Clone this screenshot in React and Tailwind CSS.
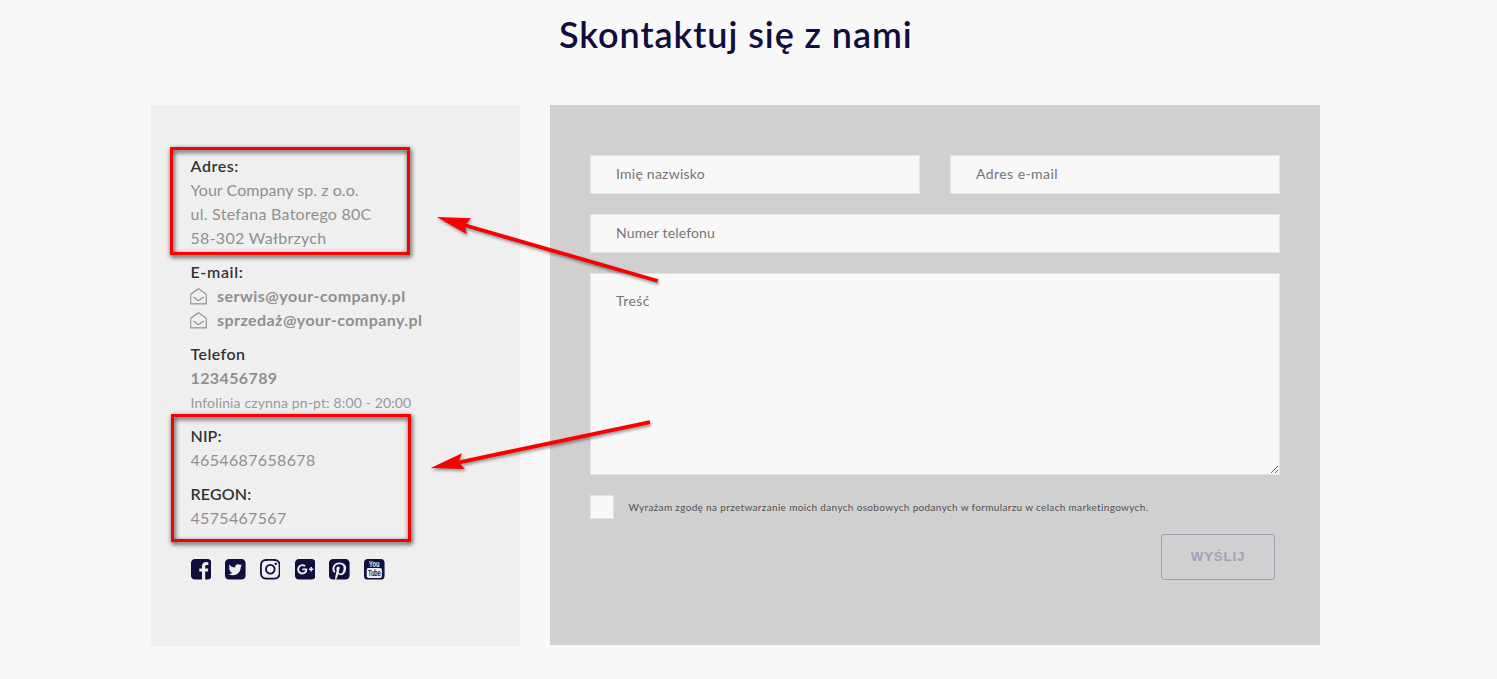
const SQUARE =
  "V1376q0 119-84.5 203.5t-203.5 84.5h-960q-119 0-203.5-84.5t-84.5-203.5v-960q0-119 84.5-203.5t203.5-84.5h960q119 0 203.5 84.5t84.5 203.5z";

const SOCIAL = [
  {
    name: "Facebook",
    d: "M1376 128q119 0 203.5 84.5t84.5 203.5v960q0 119-84.5 203.5t-203.5 84.5h-188v-595h199l30-232h-229v-148q0-56 23.5-84t91.5-28l122-1v-207q-63-9-178-9-136 0-217.5 80t-81.5 226v171h-200v232h200v595h-532q-119 0-203.5-84.5t-84.5-203.5v-960q0-119 84.5-203.5t203.5-84.5h960z",
  },
  {
    name: "Twitter",
    d: "M1408 610q-56 25-121 34 68-40 93-117-65 38-134 51-61-66-153-66-87 0-148.5 61.5t-61.5 148.5q0 29 5 48-129-7-242-65t-192-155q-29 50-29 106 0 114 91 175-47-1-100-26v2q0 75 50 133.5t123 72.5q-29 8-51 8-13 0-39-4 21 63 74.5 104t121.5 42q-116 90-261 90-26 0-50-3 148 94 322 94 112 0 210-35.5t168-95 120.5-137 75-162 24.5-168.5q0-18-1-27 63-45 105-109zm256-194v960q0 119-84.5 203.5t-203.5 84.5h-960q-119 0-203.5-84.5t-84.5-203.5v-960q0-119 84.5-203.5t203.5-84.5h960q119 0 203.5 84.5t84.5 203.5z",
  },
  {
    name: "Instagram",
    d: "M1152 896q0-106-75-181t-181-75-181 75-75 181 75 181 181 75 181-75 75-181zm138 0q0 164-115 279t-279 115-279-115-115-279 115-279 279-115 279 115 115 279zm108-410q0 38-27 65t-65 27-65-27-27-65 27-65 65-27 65 27 27 65zm-502-220q-7 0-76.5-.5t-105.5 0-96.5 3-103 10-71.5 18.5q-50 20-88 58t-58 88q-11 29-18.5 71.5t-10 103-3 96.5 0 105.5.5 76.5-.5 76.5 0 105.5 3 96.5 10 103 18.5 71.5q20 50 58 88t88 58q29 11 71.5 18.5t103 10 96.5 3 105.5 0 76.5-.5 76.5.5 105.5 0 96.5-3 103-10 71.5-18.5q50-20 88-58t58-88q11-29 18.5-71.5t10-103 3-96.5 0-105.5-.5-76.5.5-76.5 0-105.5-3-96.5-10-103-18.5-71.5q-20-50-58-88t-88-58q-29-11-71.5-18.5t-103-10-96.5-3-105.5 0-76.5.5zm768 630q0 229-5 317-10 208-124 322t-322 124q-88 5-317 5t-317-5q-208-10-322-124t-124-322q-5-88-5-317t5-317q10-208 124-322t322-124q88-5 317-5t317 5q208 10 322 124t124 322q5 88 5 317z",
  },
  {
    name: "Google Plus",
    d: "M1045 905q0-26-6-64h-362v132h217q-3 24-16.5 50t-37.5 53-66.5 44.5-96.5 17.5q-99 0-169-71t-70-171 70-171 169-71q92 0 153 59l104-101q-108-100-257-100-160 0-272 112.5t-112 271.5 112 271.5 272 112.5q165 0 266.5-105t101.5-270zm345 46h109v-110h-109v-110h-110v110h-110v110h110v110h110v-110zm274-535" + SQUARE,
  },
  {
    name: "Pinterest",
    d: "M1376 128q119 0 203.5 84.5t84.5 203.5v960q0 119-84.5 203.5t-203.5 84.5h-725q85-122 108-210 9-34 53-209 21 39 73.5 67t112.5 28q181 0 295.5-147.5t114.5-373.5q0-84-35-162.5t-96.5-139-152.5-97-197-36.5q-104 0-194.5 28.5t-153 76.5-107.5 109.5-66.5 128-21.5 132.5q0 102 39.5 180t116.5 110q13 5 23.5 0t14.5-19q10-44 15-61 6-23-11-42-50-62-50-150 0-150 103.5-256.5t270.5-106.5q149 0 232.5 81t83.5 210q0 168-67.5 286t-173.5 118q-60 0-97-43.5t-23-103.5q8-34 26.5-92.5t29.5-102 11-74.5q0-49-26.5-81.5t-75.5-32.5q-61 0-103.5 56.5t-42.5 139.5q0 72 24 121l-98 414q-24 100-7 254h-183q-119 0-203.5-84.5t-84.5-203.5v-960q0-119 84.5-203.5t203.5-84.5h960z",
  },
];

function SocialIcon({ name, d }) {
  return (
    <svg aria-label={name} viewBox="128 128 1536 1536" className="size-[20.57px]" fill="currentColor">
      <path d={d} />
    </svg>
  );
}

function YoutubeIcon() {
  return (
    <svg
      aria-label="YouTube"
      viewBox="0 0 20.57 20.57"
      className="size-[20.57px] overflow-visible font-['Liberation_Sans']"
      fill="currentColor"
    >
      <rect width="20.57" height="20.57" rx="3.9" />
      <rect x="2.7" y="8.9" width="15.2" height="10.2" rx="1.8" fill="#efefef" />
      <text x="5" y="7.7" fontSize="9" fontWeight="700" textLength="10.4" lengthAdjust="spacingAndGlyphs" fill="#efefef">
        You
      </text>
      <text x="3.9" y="17.3" fontSize="9.4" textLength="12.8" lengthAdjust="spacingAndGlyphs" stroke="currentColor" strokeWidth="0.25">
        Tube
      </text>
    </svg>
  );
}

function Envelope() {
  return (
    <svg
      viewBox="0 0 17 17"
      className="mr-[10px] size-[17px] shrink-0"
      fill="none"
      stroke="#919191"
      strokeWidth="1.1"
      strokeLinejoin="round"
      strokeLinecap="round"
    >
      <path d="M.7 6.3 8.5.8l7.8 5.5v9.6H.7z" />
      <path d="m3.7 9.2 4.8 3.5 4.8-3.5" />
    </svg>
  );
}

function Label({ className = "", children }) {
  return <p className={`font-semibold text-[#333] ${className}`}>{children}</p>;
}

const FIELD =
  "block w-full border border-[#e3e3ee] bg-[#f8f8f8] px-[25px] text-[14px] text-[#333] outline-none placeholder:text-[#757575]";

function Info() {
  return (
    <aside className="h-[541px] w-[369px] bg-[#efefef] pl-[39.5px] pt-[49px] text-[16px] leading-6 text-[#8f8f8f]">
      <div className="flex flex-col gap-2.5">
        <div>
          <Label className="tracking-[0.58px]">Adres:</Label>
          <p className="tracking-[0.05px]">Your Company sp. z o.o.</p>
          <p className="tracking-[0.26px]">ul. Stefana Batorego 80C</p>
          <p className="tracking-[0.29px]">58-302 Wałbrzych</p>
        </div>
        <div>
          <Label className="tracking-[0.65px]">E-mail:</Label>
          <p className="-ml-[0.5px] flex items-center font-bold tracking-[0.48px]">
            <Envelope />
            serwis@your-company.pl
          </p>
          <p className="-ml-[0.5px] flex items-center font-bold tracking-[0.44px]">
            <Envelope />
            sprzedaż@your-company.pl
          </p>
        </div>
        <div>
          <Label className="tracking-[0.44px]">Telefon</Label>
          <p className="font-bold tracking-[0.39px]">123456789</p>
          <p className="pt-px text-[14px] leading-[23px] tracking-[0.14px] text-[#999]">Infolinia czynna pn-pt: 8:00 - 20:00</p>
        </div>
        <div>
          <Label className="tracking-[0.1px]">NIP:</Label>
          <p className="tracking-[0.34px]">4654687658678</p>
        </div>
        <div>
          <Label className="tracking-[0.17px]">REGON:</Label>
          <p className="tracking-[0.32px]">4575467567</p>
        </div>
      </div>
      <div className="mt-[29px] flex gap-[14.15px] text-[#0f0e3d]">
        {SOCIAL.map((s) => (
          <SocialIcon key={s.name} {...s} />
        ))}
        <YoutubeIcon />
      </div>
    </aside>
  );
}

function ContactForm() {
  return (
    <form className="h-[540px] w-[770px] bg-[#d0d0d0] px-10 pt-[50px]">
      <div className="grid grid-cols-2 gap-x-[30px] gap-y-5">
        <input className={`${FIELD} h-[39px] pb-0.5 tracking-[0.24px]`} placeholder="Imię nazwisko" />
        <input className={`${FIELD} h-[39px] pb-0.5 tracking-[0.44px]`} placeholder="Adres e-mail" />
        <input className={`${FIELD} col-span-2 h-[39px] pb-0.5 tracking-[0.15px]`} placeholder="Numer telefonu" />
        <textarea className={`${FIELD} col-span-2 h-[202px] resize pt-[17px] leading-5 tracking-[0.46px]`} placeholder="Treść" />
      </div>
      <label className="mt-5 flex h-6 items-center">
        <input type="checkbox" className="size-6 shrink-0 appearance-none border border-[#e3e3ee] bg-[#f8f8f8]" />
        <span className="ml-[14.5px] whitespace-nowrap text-[10px] tracking-[0.335px] text-[#505050]">
          Wyrażam zgodę na przetwarzanie moich danych osobowych podanych w formularzu w celach marketingowych.
        </span>
      </label>
      <div className="mt-[15px] flex justify-end pr-[5px]">
        <button
          type="button"
          className="h-[46px] w-[114px] rounded-[3px] border border-[#9f9eb1] font-['Liberation_Sans',sans-serif] text-[13.33px] font-bold tracking-[0.8px] text-[#a1a0b3]"
        >
          WYŚLIJ
        </button>
      </div>
    </form>
  );
}

function Annotations() {
  const frame = "absolute border-[3px] border-[#f80000] drop-shadow-[1px_2px_2.5px_rgba(0,0,0,0.85)]";
  return (
    <div className="pointer-events-none absolute inset-0">
      <div className={`${frame} left-[170px] top-[147px] h-[108px] w-[240px]`} />
      <div className={`${frame} left-[171px] top-[414px] h-[128px] w-[240px]`} />
      <svg
        viewBox="0 0 1497 679"
        className="absolute left-0 top-0 h-[679px] w-[1497px] drop-shadow-[1px_2px_1.5px_rgba(0,0,0,0.4)]"
        fill="#f80000"
        stroke="#f80000"
      >
        <path d="M464 225 657.8 281" strokeWidth="3.8" />
        <path d="m436.7 217 34.3 1.2-6.3 7.2 2.2 8.8z" stroke="none" />
        <path d="M459 462.3 650 422.2" strokeWidth="3.8" />
        <path d="m430.7 468 31.2-14.8-3.4 9 6.4 6.9z" stroke="none" />
      </svg>
    </div>
  );
}

export default function App() {
  return (
    <main className="relative h-[679px] w-[1497px] overflow-hidden bg-[#f8f8f8] font-[Lato,'Noto_Sans',sans-serif]">
      <h1 className="ml-[559px] h-[105px] pt-[13px] text-[36px] font-semibold leading-[43px] tracking-[0.93px] text-[#0f0e3d]">
        Skontaktuj się z nami
      </h1>
      <div className="ml-[151px] flex items-start gap-[30px]">
        <Info />
        <ContactForm />
      </div>
      <Annotations />
    </main>
  );
}
